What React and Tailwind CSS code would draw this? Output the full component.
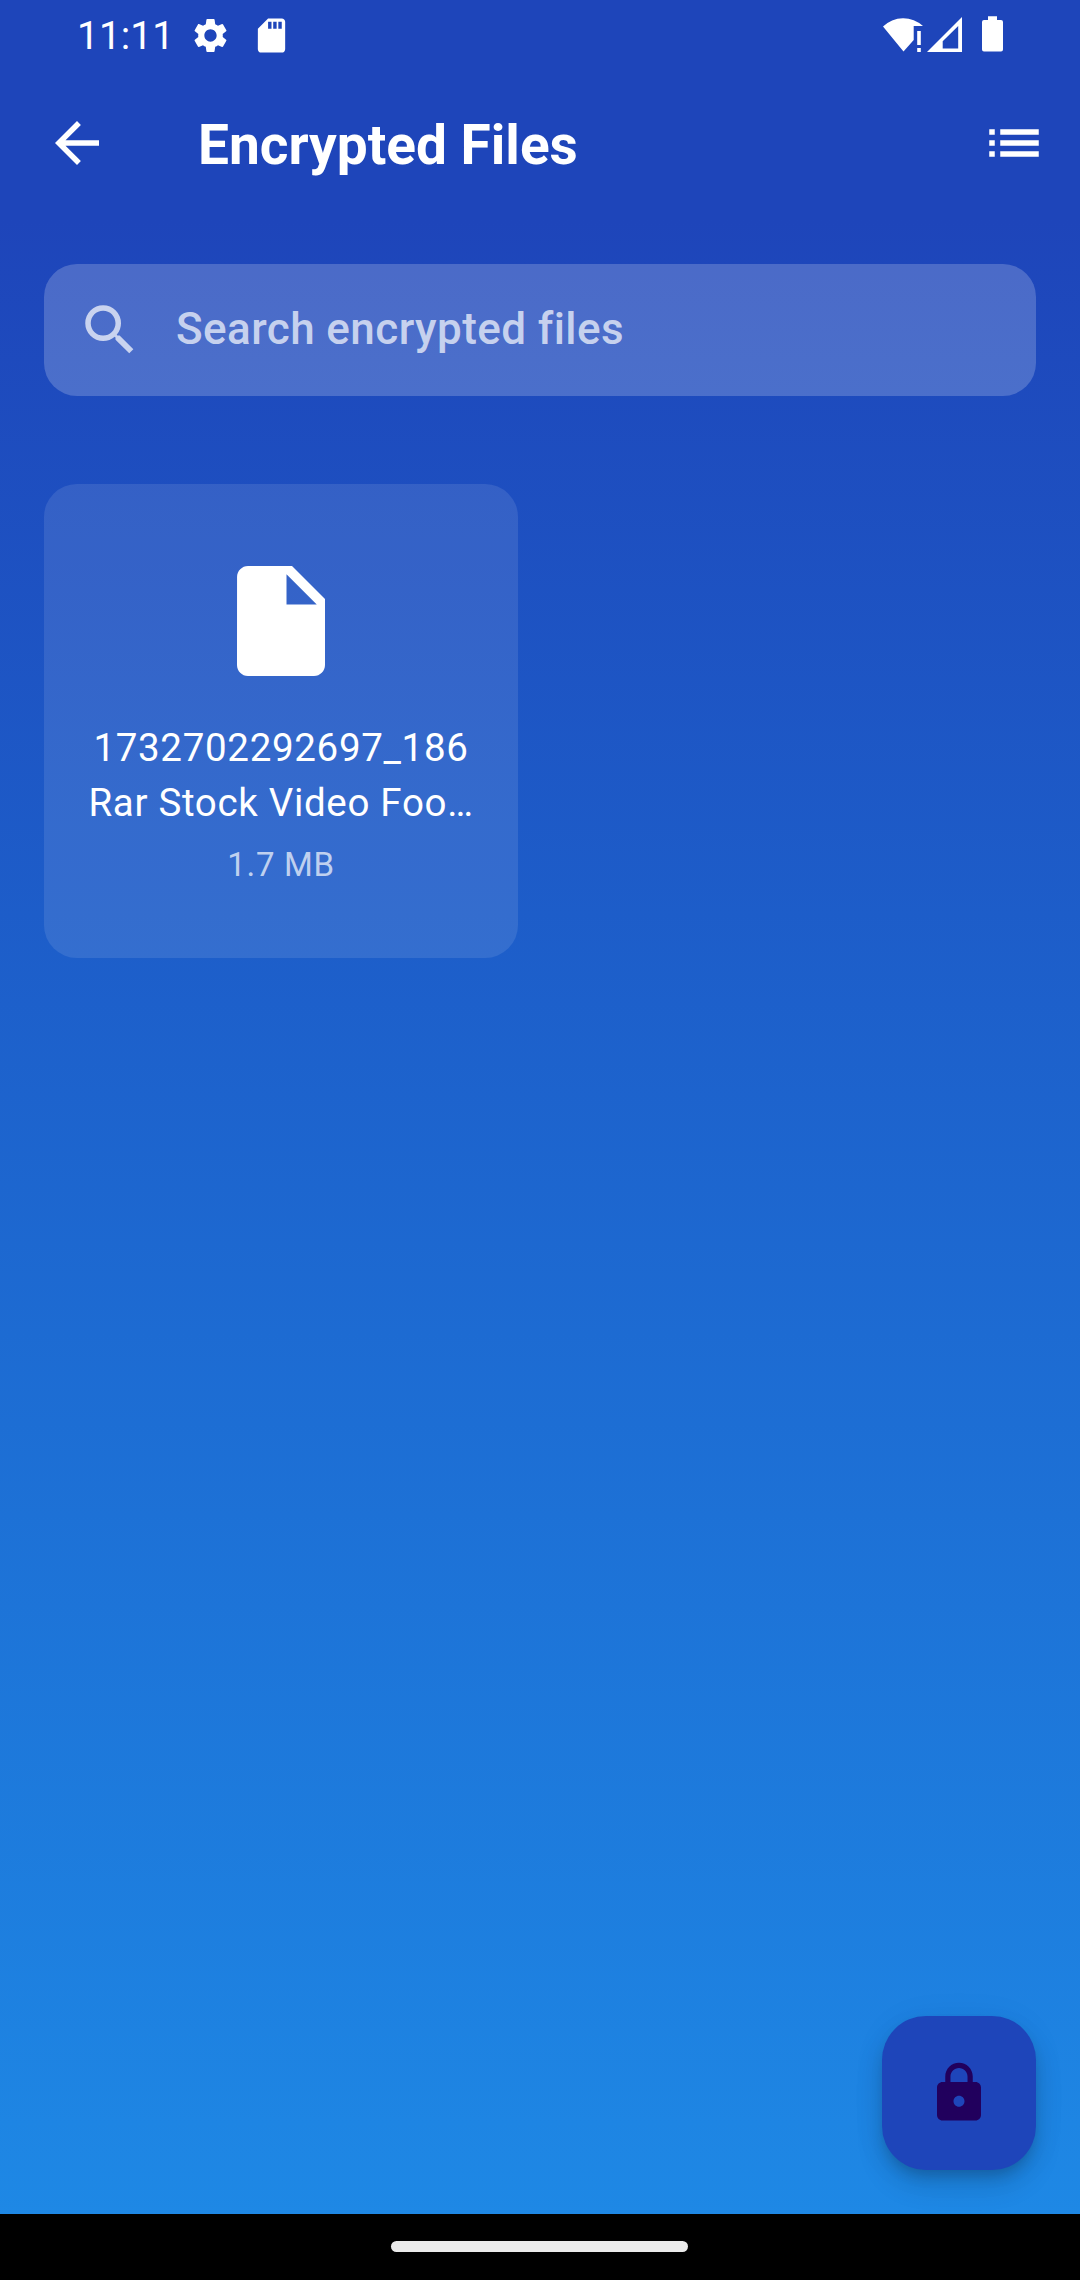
import { MdArrowBack, MdInsertDriveFile, MdList, MdLock, MdSdCard, MdSearch, MdSettings } from "react-icons/md";

function WifiAlertIcon() {
  return (
    <svg width="40" height="36" viewBox="0 0 40 36" fill="currentColor">
      <path d="M0 10.5A29 29 0 0 1 40 10H30.7V24L20.5 35.5Z" />
      <path d="M34.2 15H37.8V29H34.2ZM34.2 32H37.8V36H34.2Z" />
    </svg>
  );
}

function SignalIcon() {
  return (
    <svg width="35" height="36" viewBox="0 0 35 36" fill="currentColor">
      <path fillRule="evenodd" d="M0 36L35 1V36ZM15.7 25.3V32.4H31.2V10Z" />
    </svg>
  );
}

function BatteryIcon() {
  return (
    <svg width="21" height="36" viewBox="0 0 21 36" fill="currentColor">
      <path d="M6 .3H15V4H19Q21 4 21 6V33.5Q21 35.5 19 35.5H2Q0 35.5 0 33.5V6Q0 4 2 4H6Z" />
    </svg>
  );
}

function StatusBar() {
  return (
    <div className="flex h-[66px] justify-between pl-[77px] pr-[77px] text-white">
      <div className="flex pt-[15px]">
        <span className="-mt-px w-[113px] text-[39px] leading-[44px]">11:11</span>
        <MdSettings size={41} />
        <MdSdCard size={41} className="ml-5" />
      </div>
      <div className="flex pt-4">
        <WifiAlertIcon />
        <div className="ml-1"><SignalIcon /></div>
        <div className="ml-5"><BatteryIcon /></div>
      </div>
    </div>
  );
}

function AppBar() {
  return (
    <header className="flex h-[154px] items-center pl-11 pr-[33px] text-white">
      <MdArrowBack size={66} />
      <h1 className="ml-[88px] flex-1 pt-[3px] text-[55px] leading-[70px] font-bold">Encrypted Files</h1>
      <MdList size={66} />
    </header>
  );
}

function SearchField() {
  return (
    <div className="flex h-[132px] items-center rounded-[33px] bg-white/20 px-[33px] text-white/70">
      <MdSearch size={66} />
      <span className="ml-[33px] pb-[2px] text-[44px] font-medium leading-[52px] tracking-[0.42px]">Search encrypted files</span>
    </div>
  );
}

function FileCard({ lines, size }) {
  return (
    <div className="flex size-[474px] flex-col items-center justify-center rounded-[33px] bg-white/10 text-center text-white">
      <MdInsertDriveFile size={132} />
      <div className="mt-[33px] text-[38.5px] leading-[55px] tracking-[0.68px]">
        {lines.map((line) => (
          <p key={line} className="whitespace-nowrap">{line}</p>
        ))}
      </div>
      <p className="mt-[11px] text-[33px] leading-[47px] tracking-[0.69px] text-white/70">{size}</p>
    </div>
  );
}

export default function App() {
  return (
    <div className="flex h-[2280px] w-[1080px] flex-col overflow-hidden bg-[#1e45ba] font-['Roboto',sans-serif]">
      <StatusBar />
      <AppBar />
      <main className="relative flex flex-1 flex-col gap-[88px] bg-linear-to-b from-[#1e45ba] to-[#1e88e5] px-11 pt-11">
        <SearchField />
        <FileCard lines={["1732702292697_186", "Rar Stock Video Foo…"]} size="1.7 MB" />
        <button className="absolute right-11 bottom-11 flex size-[154px] items-center justify-center rounded-[44px] bg-[#1e45ba] text-[#21005d] shadow-[0_8px_14px_-3px_rgba(0,0,0,0.18),0_16px_28px_0_rgba(0,0,0,0.12),0_3px_40px_0_rgba(0,0,0,0.04)]">
          <MdLock size={66} />
        </button>
      </main>
      <footer className="flex h-[66px] items-center justify-center bg-black pr-px pb-px">
        <div className="h-[11px] w-[297px] rounded-full bg-[#ebebeb]" />
      </footer>
    </div>
  );
}
